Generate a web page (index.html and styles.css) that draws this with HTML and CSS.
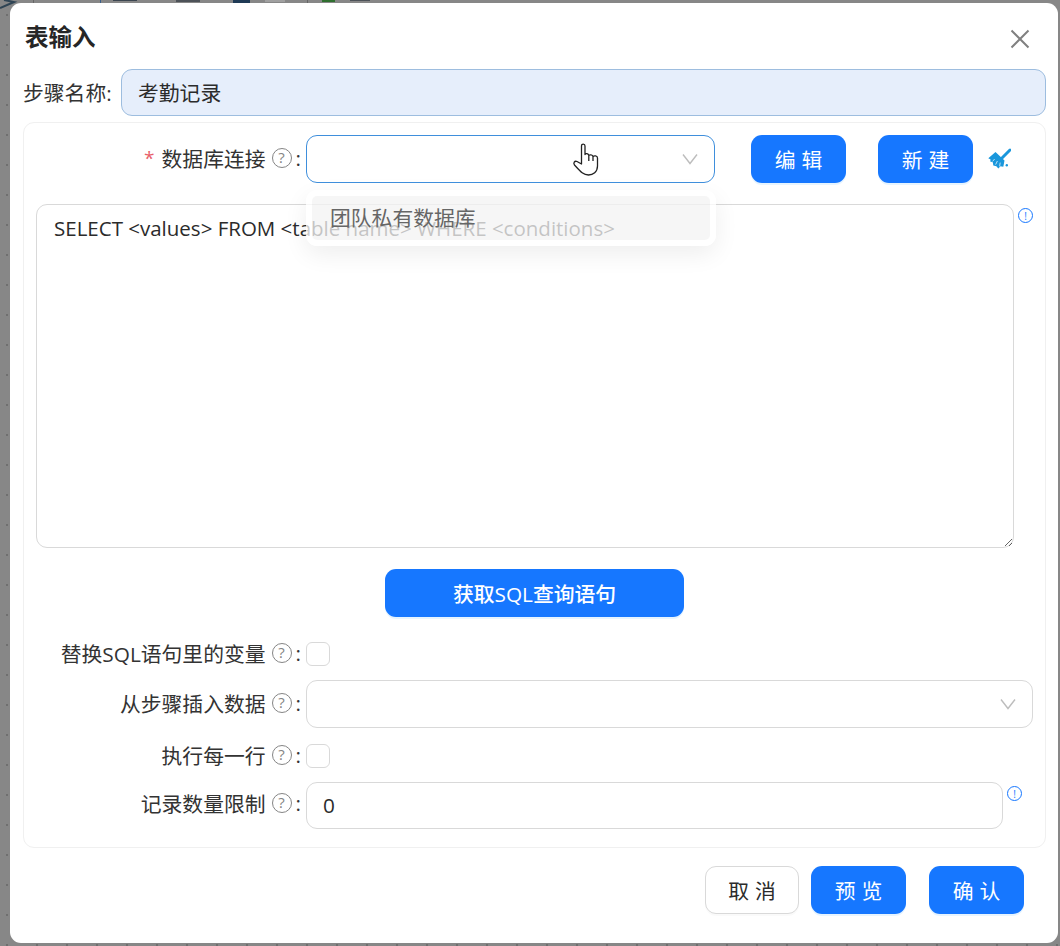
FILE: index.html
```html
<!DOCTYPE html>
<html lang="zh-CN">
<head>
    <meta charset="UTF-8">
    <meta name="viewport" content="width=device-width, initial-scale=1.0">
    <title>表输入</title>
    <link rel="stylesheet" href="styles.css">
</head>
<body>
<!-- 背后被遮住的工具栏，只露出一条边 -->
<svg class="backdrop-bar" width="1060" height="12" viewBox="0 0 1060 12">
    <path d="M0 8 L14 2 L4 0" fill="none" stroke="#2f4454" stroke-width="2"/>
    <rect x="33" y="0" width="1" height="3" fill="#666"/>
    <rect x="100" y="0" width="1" height="3" fill="#3a5f8a"/>
    <rect x="113" y="0" width="24" height="1" fill="#3c4650"/>
    <rect x="176" y="0" width="24" height="2" fill="#4d5258"/>
    <rect x="233" y="0" width="17" height="3" fill="#1f3a55"/>
    <rect x="265" y="0" width="20" height="2" fill="#a0a0a0"/>
    <rect x="307" y="0" width="1" height="3" fill="#666"/>
    <rect x="322" y="0" width="13" height="2" fill="#2f6f2f"/>
    <rect x="350" y="0" width="20" height="1" fill="#4d5258"/>
</svg>

<div class="modal">
    <div class="modal-head">
        <h1 class="modal-title">表输入</h1>
        <svg class="close-icon" width="20" height="20" viewBox="0 0 20 20">
            <path d="M1.5 1.5 L18.5 18.5 M18.5 1.5 L1.5 18.5" fill="none" stroke="#808080" stroke-width="2"/>
        </svg>
    </div>

    <div class="name-row">
        <label class="name-label">步骤名称:</label>
        <input class="name-input" type="text" value="考勤记录">
    </div>

    <div class="card">
        <div class="row row-db">
            <div class="label"><span class="required">*</span>数据库连接<span class="help">?</span><span class="colon">:</span></div>
            <div class="select select-db">
                <svg class="chevron" width="16" height="12" viewBox="0 0 16 12"><path d="M1 1.5 L8 10.5 L15 1.5" fill="none" stroke="#bdbdbd" stroke-width="1.4"/></svg>
                <svg class="hand" width="28" height="34" viewBox="0 0 28 34">
                    <path d="M9.5 20 V3 C9.5 .5 13 .5 13 3 V11.5 C13.5 10 16.5 10.3 16.8 12.5 C17.5 11.5 20.5 11.5 21 13.5 C22 12.5 25.5 12.5 25.5 15 V23 C25.5 29 21 32 16.5 32 C11 32 8 28 2.5 22 C1 20 2.5 17.5 5 18.5 L9.5 21 Z M16.8 12.5 V18 M21 13.5 V18" fill="#fff" stroke="#222" stroke-width="1.3" stroke-linejoin="round"/>
                </svg>
                <div class="dropdown">
                    <div class="option">团队私有数据库</div>
                </div>
            </div>
            <button class="btn btn-primary btn-spaced btn-edit">编辑</button>
            <button class="btn btn-primary btn-spaced btn-new">新建</button>
            <svg class="broom" width="23" height="23" viewBox="0 0 23 23">
                <path d="M22 2 L14.5 9.5" fill="none" stroke="#1a97dc" stroke-width="3" stroke-linecap="round"/>
                <path d="M7.5 4 L16.5 12.5 L15.3 18.7 L12.5 18.2 L10.3 20.6 L8.4 18.2 L5.3 17.4 L4.8 14.2 L2.2 13.6 L2.6 11.6 L0.3 10.3 Z" fill="#1a97dc"/>
                <path d="M6.6 11 L4.6 13.4 M9.4 13 L7.6 16.6 M12.2 14.6 L11.6 18.4" fill="none" stroke="#fff" stroke-width="0.7"/>
                <circle cx="18.8" cy="17.2" r="1.2" fill="#1a97dc"/>
            </svg>
        </div>

        <div class="sql-row">
            <textarea class="sql-input" spellcheck="false">SELECT &lt;values&gt; FROM &lt;table name&gt; WHERE &lt;conditions&gt;</textarea>
            <span class="info">!</span>
        </div>

        <div class="sql-btn-row">
            <button class="btn btn-primary btn-sql">获取SQL查询语句</button>
        </div>

        <div class="row row-check">
            <div class="label">替换SQL语句里的变量<span class="help">?</span><span class="colon">:</span></div>
            <input class="check" type="checkbox">
        </div>
        <div class="row row-step">
            <div class="label">从步骤插入数据<span class="help">?</span><span class="colon">:</span></div>
            <div class="select select-step">
                <svg class="chevron" width="16" height="12" viewBox="0 0 16 12"><path d="M1 1.5 L8 10.5 L15 1.5" fill="none" stroke="#bdbdbd" stroke-width="1.4"/></svg>
            </div>
        </div>
        <div class="row row-each">
            <div class="label">执行每一行<span class="help">?</span><span class="colon">:</span></div>
            <input class="check" type="checkbox">
        </div>
        <div class="row row-limit">
            <div class="label">记录数量限制<span class="help">?</span><span class="colon">:</span></div>
            <input class="limit-input" type="text" value="0">
            <span class="info">!</span>
        </div>
    </div>

    <div class="modal-foot">
        <button class="btn btn-default btn-spaced btn-cancel">取消</button>
        <button class="btn btn-primary btn-spaced btn-preview">预览</button>
        <button class="btn btn-primary btn-spaced">确认</button>
    </div>
</div>
</body>
</html>
```

FILE: styles.css
```css
* {
    margin: 0;
    padding: 0;
    box-sizing: border-box;
    font-family: "Open Sans", "Noto Sans CJK SC", sans-serif;
}
html, body {
    height: 946px;
    overflow: hidden;
}
body {
    position: relative;
    background-color: #878787;
    background-image: radial-gradient(circle, #6f6f6f 1px, transparent 1.5px);
    background-size: 30px 30px;
    background-position: -8px 0;
    padding: 3px 0 0 10px;
    color: #2b2b2b;
    font-size: 20.8px;
}
.backdrop-bar {
    position: absolute;
    left: 0;
    top: 0;
}
/*弹窗*/
.modal {
    position: relative;
    width: 1048px;
    height: 940px;
    background: #fff;
    border-radius: 11px;
    padding: 0 12px 0 13px;
}
.modal-head {
    height: 66px;
    padding-top: 2px;
    padding-right: 16px;
    display: flex;
    align-items: center;
    justify-content: space-between;
}
.modal-title {
    font-size: 23.5px;
    font-weight: 700;
    line-height: 32px;
    padding-left: 2px;
    color: #262626;
}
.close-icon {
    margin-top: 4px;
}
/*步骤名称*/
.name-row {
    display: flex;
    align-items: center;
    gap: 6px;
    margin-bottom: 6px;
}
.name-label {
    width: 92px;
    padding-bottom: 2px;
    white-space: nowrap;
    color: #333;
}
.name-input {
    flex: 1;
    height: 47px;
    border: 1px solid #9dbddf;
    border-radius: 11px;
    background: #e6eefb;
    padding: 0 16px 2px;
    font-size: 20.8px;
    color: #2b2b2b;
}
/*表单卡片*/
.card {
    height: 726px;
    border: 1px solid #f0f0f0;
    border-radius: 11px;
    padding-top: 12px;
}
.row {
    display: flex;
    align-items: center;
}
.row-check {
    margin-top: 25px;
    height: 24px;
}
.row-step {
    margin-top: 14px;
}
.row-each {
    margin-top: 16px;
    height: 24px;
}
.row-limit {
    margin-top: 14px;
    align-items: flex-start;
}
.row-limit .label {
    height: 44px;
}
.label {
    width: 282px;
    flex: none;
    padding-right: 5px;
    padding-bottom: 3px;
    display: flex;
    align-items: center;
    justify-content: flex-end;
    white-space: nowrap;
    color: #333;
}
.required {
    color: #e8606a;
    margin-right: 7px;
    font-size: 19px;
}
.help {
    width: 20px;
    height: 20px;
    margin-left: 6px;
    border: 1.5px solid #858585;
    border-radius: 50%;
    display: flex;
    align-items: center;
    justify-content: center;
    font-size: 15px;
    line-height: 1;
    color: #858585;
}
.colon {
    margin-left: 4px;
}
.info {
    width: 15px;
    height: 15px;
    flex: none;
    margin: 4px 0 0 4px;
    border: 1px solid #1677ff;
    border-radius: 50%;
    display: flex;
    align-items: center;
    justify-content: center;
    font-size: 10px;
    line-height: 1;
    color: #1677ff;
}
/*下拉框*/
.select {
    position: relative;
    height: 48px;
    border: 1px solid #d9d9d9;
    border-radius: 11px;
    background: #fff;
}
.select-db {
    width: 409px;
    border-color: #3f8fdc;
}
.select-step {
    width: 727px;
}
.chevron {
    position: absolute;
    right: 16px;
    top: 17px;
}
.hand {
    position: absolute;
    left: 265px;
    top: 7px;
    z-index: 3;
}
.dropdown {
    position: absolute;
    left: -1px;
    top: 54px;
    width: 410px;
    padding: 6px;
    border-radius: 11px;
    background: rgba(255, 255, 255, 0.76);
    box-shadow: 0 8px 24px rgba(0, 0, 0, 0.07);
    z-index: 2;
}
.option {
    height: 44px;
    line-height: 44px;
    padding-left: 18px;
    border-radius: 5px;
    background: rgba(0, 0, 0, 0.035);
    color: #666;
}
/*按钮*/
.btn {
    height: 48px;
    border: none;
    border-radius: 11px;
    font-size: 20.8px;
    cursor: pointer;
    white-space: nowrap;
}
.btn-primary {
    width: 95px;
    background: #1677ff;
    color: #fff;
    box-shadow: 0 2px 0 rgba(5, 145, 255, 0.1);
}
.btn-default {
    width: 94px;
    background: #fff;
    border: 1px solid #d9d9d9;
    color: #2b2b2b;
    box-shadow: 0 2px 0 rgba(0, 0, 0, 0.02);
}
.btn-spaced {
    letter-spacing: 6px;
    text-indent: 6px;
}
.btn-edit {
    margin-left: 36px;
}
.btn-new {
    margin-left: 32px;
}
.broom {
    margin-left: 15px;
    flex: none;
}
/*SQL输入框*/
.sql-row {
    display: flex;
    align-items: flex-start;
    margin: 21px 0 0 12px;
}
.sql-input {
    width: 978px;
    height: 344px;
    border: 1px solid #d9d9d9;
    border-radius: 11px;
    padding: 8px 17px;
    font-size: 20.5px;
    line-height: 30px;
    color: #2b2b2b;
    resize: vertical;
    outline: none;
}
.sql-btn-row {
    margin: 21px 0 0 361px;
}
.btn-sql {
    width: 299px;
    font-weight: 500;
}
.check {
    appearance: none;
    width: 24px;
    height: 24px;
    border: 1px solid #d9d9d9;
    border-radius: 6px;
    background: #fff;
}
.limit-input {
    width: 697px;
    height: 47px;
    border: 1px solid #d9d9d9;
    border-radius: 11px;
    padding: 0 16px 2px;
    font-size: 20.8px;
    color: #2b2b2b;
}
/*底部按钮*/
.modal-foot {
    display: flex;
    justify-content: flex-end;
    gap: 23px;
    margin-top: 18px;
    padding-right: 22px;
}
.btn-cancel {
    margin-right: -11px;
}
```
